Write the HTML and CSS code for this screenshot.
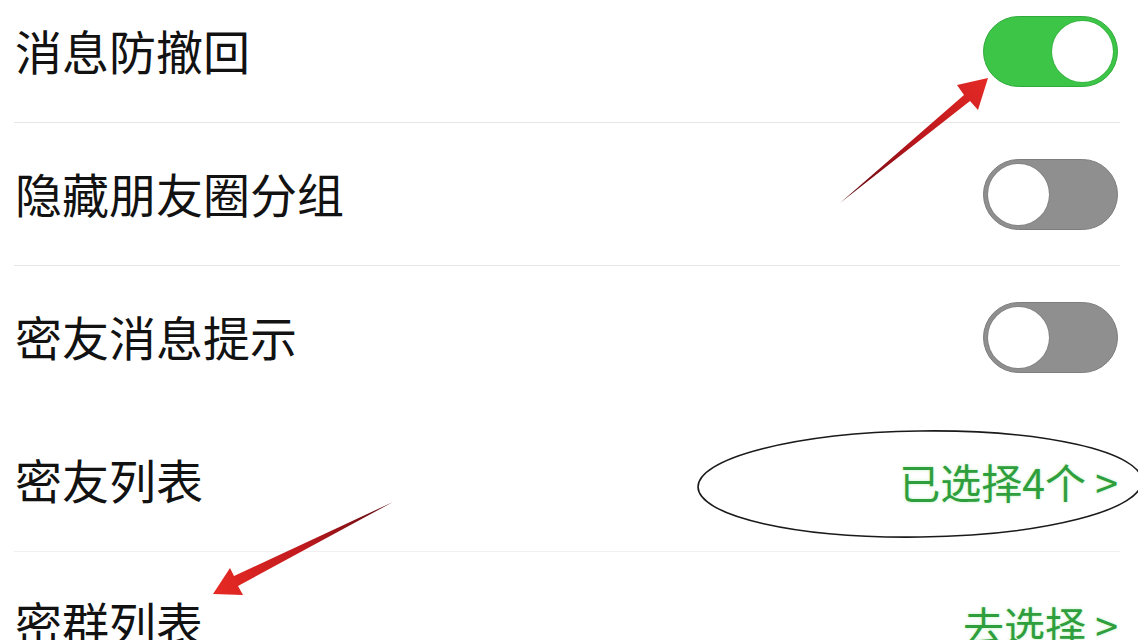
FILE: index.html
```html
<!DOCTYPE html>
<html lang="zh">
<head>
<meta charset="utf-8">
<title>设置</title>
<link rel="stylesheet" href="styles.css">
</head>
<body>
<div class="page">
  <ul class="list">
    <li class="row">
      <span class="label">消息防撤回</span>
      <span class="toggle on"><span class="knob"></span></span>
    </li>
    <li class="row">
      <span class="label">隐藏朋友圈分组</span>
      <span class="toggle"><span class="knob"></span></span>
    </li>
    <li class="row no-line">
      <span class="label">密友消息提示</span>
      <span class="toggle"><span class="knob"></span></span>
    </li>
    <li class="row faint-line">
      <span class="label">密友列表</span>
      <span class="value">已选择4个 &gt;</span>
    </li>
    <li class="row">
      <span class="label">密群列表</span>
      <span class="value">去选择 &gt;</span>
    </li>
  </ul>
  <svg class="marks" width="1138" height="640" viewBox="0 0 1138 640">
    <defs>
      <linearGradient id="g1" x1="840" y1="203" x2="988" y2="78" gradientUnits="userSpaceOnUse">
        <stop offset="0" stop-color="#5a0a10"/>
        <stop offset="0.5" stop-color="#b8161c"/>
        <stop offset="1" stop-color="#e52a26"/>
      </linearGradient>
      <linearGradient id="g2" x1="393" y1="502" x2="213" y2="594" gradientUnits="userSpaceOnUse">
        <stop offset="0" stop-color="#5a0a10"/>
        <stop offset="0.5" stop-color="#c01a1e"/>
        <stop offset="1" stop-color="#e82a24"/>
      </linearGradient>
    </defs>
    <polygon points="840,203 964,95 957,85 988,78 978,110 970,101" fill="url(#g1)"/>
    <polygon points="393,502 234,576 230,568 213,594 243,595 238,586" fill="url(#g2)"/>
    <ellipse cx="920" cy="484" rx="222" ry="53" transform="rotate(-0.8 920 484)" fill="none" stroke="#1a1a1a" stroke-width="1.6"/>
  </svg>
</div>
</body>
</html>
```

FILE: styles.css
```css
html, body {
  margin: 0;
  padding: 0;
  background: #ffffff;
}

.page {
  position: relative;
  width: 1138px;
  height: 640px;
  overflow: hidden;
  font-family: "Noto Sans CJK SC", "Noto Sans", sans-serif;
}

.list {
  list-style: none;
  margin: -20px 18px 0 14px;
  padding: 0;
}

.row {
  height: 142px;
  border-bottom: 1.5px solid #e6e6e6;
  display: flex;
  align-items: center;
  justify-content: space-between;
  padding: 0 2px 0 1px;
}

.row.no-line {
  border-bottom-color: transparent;
}

.row.faint-line {
  border-bottom-color: #f0f0f0;
}

.label {
  font-size: 47px;
  color: #121212;
  line-height: 1;
  padding-bottom: 4px;
}

.value {
  font-size: 41px;
  color: #2f9f3e;
  line-height: 1;
  padding-top: 2px;
  text-shadow: 0 0 3px rgba(120, 220, 120, 0.5);
}

.toggle {
  box-sizing: border-box;
  width: 135px;
  height: 71px;
  border-radius: 36px;
  background: #8f8f8f;
  border: 1.5px solid #7d7d7d;
  display: flex;
  align-items: center;
  padding: 0 4px;
}

.toggle.on {
  background: #3dc548;
  border-color: #2faa3b;
  justify-content: flex-end;
}

.knob {
  width: 61px;
  height: 61px;
  border-radius: 50%;
  background: #ffffff;
  box-shadow: 0 0 0 1px rgba(0, 0, 0, 0.08);
}

.marks {
  position: absolute;
  left: 0;
  top: 0;
  pointer-events: none;
}
```
